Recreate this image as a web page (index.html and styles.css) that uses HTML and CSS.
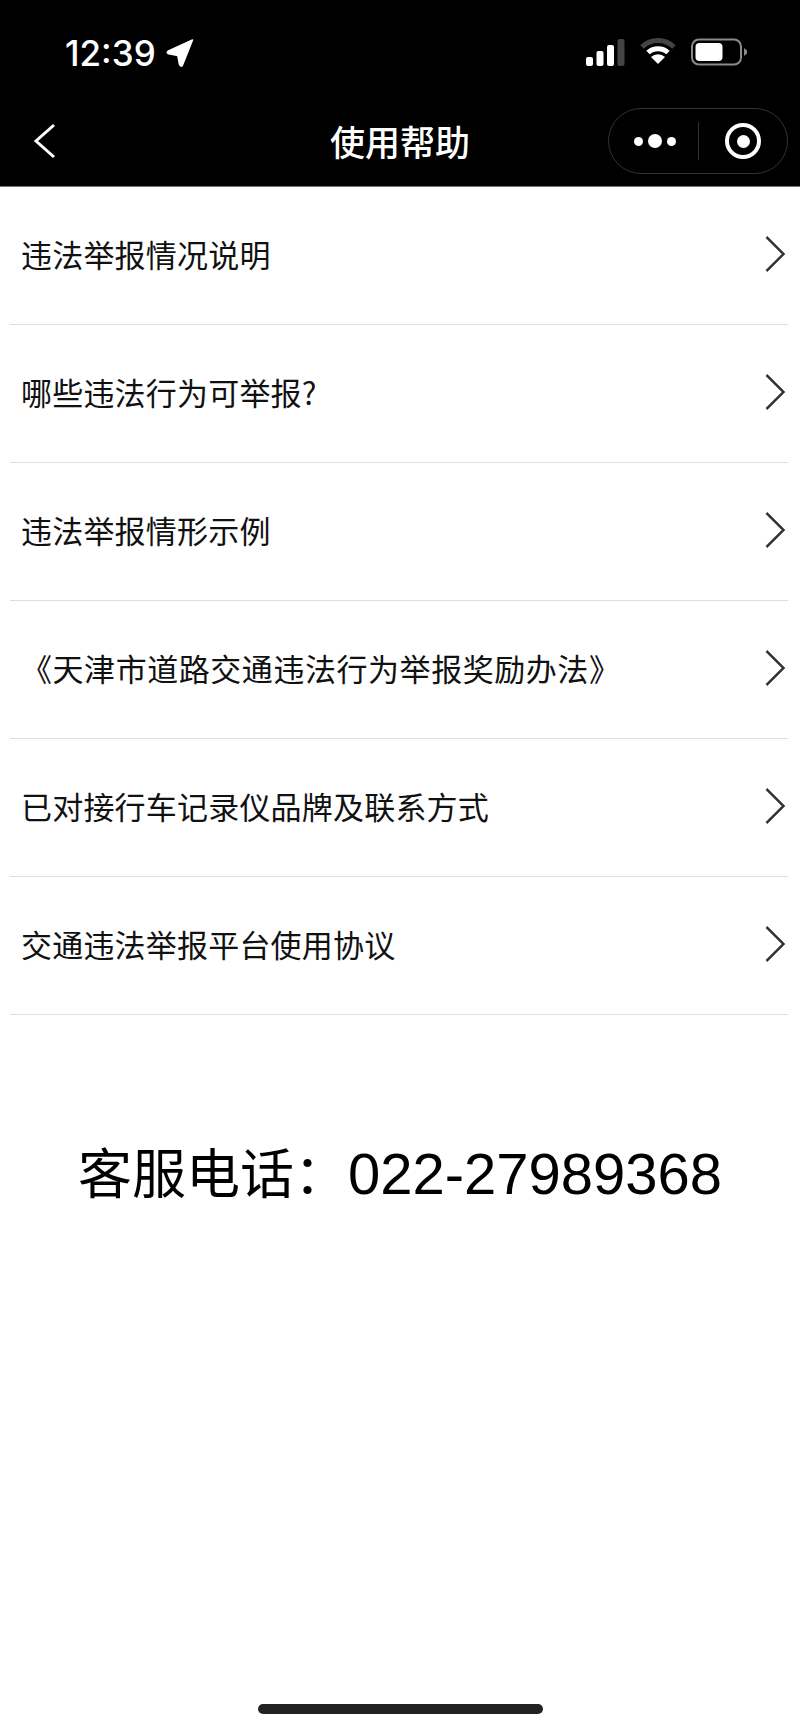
FILE: index.html
```html
<!DOCTYPE html>
<html lang="zh-CN">
<head>
  <meta charset="UTF-8">
  <meta name="viewport" content="width=device-width, initial-scale=1.0">
  <title>使用帮助</title>
  <link rel="stylesheet" href="styles.css">
</head>
<body>
  <header class="top">
    <div class="status-bar">
      <div class="status-left">
        <span class="clock">12:39</span>
        <svg class="location" width="28" height="28" viewBox="0 0 28 28"><path d="M26.500 1 L16.500 26 Q15 28.500 13.500 25.500 L11.800 16.500 L2.500 14.800 Q0 13.500 2.500 12 Z" fill="white" stroke="white" stroke-width="1.500" stroke-linejoin="round"/></svg>
      </div>
      <div class="status-right">
        <svg width="40" height="28" viewBox="0 0 40 28">
          <rect x="1" y="19" width="7" height="9" rx="2" fill="white"/>
          <rect x="11.500" y="13" width="7" height="15" rx="2" fill="white"/>
          <rect x="22" y="7" width="7" height="21" rx="2" fill="white"/>
          <rect x="32.500" y="1" width="7" height="27" rx="2" fill="#444"/>
        </svg>
        <svg width="36" height="28" viewBox="0 0 36 28">
          <path d="M2 9 A23 23 0 0 1 34 9" fill="none" stroke="#444" stroke-width="5"/>
          <path d="M8 14.500 A15 15 0 0 1 28 14.500" fill="none" stroke="white" stroke-width="5"/>
          <path d="M18 26 L11 19 A10 10 0 0 1 25 19 Z" fill="white"/>
        </svg>
        <svg width="56" height="28" viewBox="0 0 56 28">
          <rect x="1" y="1.500" width="49" height="25" rx="7" fill="none" stroke="#8a8a8a" stroke-width="2"/>
          <rect x="4.500" y="5" width="27" height="18" rx="4" fill="white"/>
          <path d="M53 10 L56 12.500 L56 15.500 L53 18 Z" fill="#8a8a8a"/>
        </svg>
      </div>
    </div>
    <div class="nav-bar">
      <svg class="back" width="24" height="36" viewBox="0 0 24 36"><path d="M21 2 L3 18 L21 34" fill="none" stroke="white" stroke-width="3"/></svg>
      <h1 class="nav-title">使用帮助</h1>
      <div class="capsule">
        <div class="dots"><i class="dot"></i><i class="dot dot-big"></i><i class="dot"></i></div>
        <div class="capsule-line"></div>
        <div class="target"><i class="target-core"></i></div>
      </div>
    </div>
  </header>

  <!-- 帮助列表 -->
  <ul class="help-list">
    <li class="help-item"><span>违法举报情况说明</span><svg class="arrow" width="24" height="38" viewBox="0 0 24 38"><path d="M3 2 L21 19 L3 36" fill="none" stroke="#333" stroke-width="2.500"/></svg></li>
    <li class="help-item"><span>哪些违法行为可举报?</span><svg class="arrow" width="24" height="38" viewBox="0 0 24 38"><path d="M3 2 L21 19 L3 36" fill="none" stroke="#333" stroke-width="2.500"/></svg></li>
    <li class="help-item"><span>违法举报情形示例</span><svg class="arrow" width="24" height="38" viewBox="0 0 24 38"><path d="M3 2 L21 19 L3 36" fill="none" stroke="#333" stroke-width="2.500"/></svg></li>
    <li class="help-item"><span class="book-title">《天津市道路交通违法行为举报奖励办法》</span><svg class="arrow" width="24" height="38" viewBox="0 0 24 38"><path d="M3 2 L21 19 L3 36" fill="none" stroke="#333" stroke-width="2.500"/></svg></li>
    <li class="help-item"><span>已对接行车记录仪品牌及联系方式</span><svg class="arrow" width="24" height="38" viewBox="0 0 24 38"><path d="M3 2 L21 19 L3 36" fill="none" stroke="#333" stroke-width="2.500"/></svg></li>
    <li class="help-item"><span>交通违法举报平台使用协议</span><svg class="arrow" width="24" height="38" viewBox="0 0 24 38"><path d="M3 2 L21 19 L3 36" fill="none" stroke="#333" stroke-width="2.500"/></svg></li>
  </ul>

  <p class="hotline"><span class="hotline-label">客服电话：</span>022-27989368</p>

  <div class="home-bar"></div>
</body>
</html>
```
FILE: styles.css
```css
* {
  box-sizing: border-box;
}
body {
  margin: 0;
  height: 1731px;
  background: #fff;
  font-family: "Liberation Sans", "Noto Sans CJK SC", sans-serif;
  color: #111;
  display: flex;
  flex-direction: column;
  overflow: hidden;
}
.top {
  height: 187px;
  background: #000;
  color: #fff;
  border-bottom: 1px solid #777;
  flex: none;
}
.status-bar {
  height: 101px;
  padding: 36px 53px 0 65px;
  display: flex;
  justify-content: space-between;
  align-items: flex-start;
}
.status-left {
  display: flex;
  align-items: center;
  gap: 10px;
}
.clock {
  font-family: Inter, "Liberation Sans", sans-serif;
  font-size: 35px;
  line-height: 34px;
  font-weight: 500;
}
.status-right {
  display: flex;
  align-items: center;
  gap: 15px;
  margin-top: 2px;
}
.nav-bar {
  height: 80px;
  padding: 0 12px 0 33px;
  display: flex;
  align-items: center;
  justify-content: space-between;
  position: relative;
}
.nav-title {
  position: absolute;
  left: 0;
  right: 0;
  margin: 0;
  text-align: center;
  font-family: "Noto Sans CJK SC", sans-serif;
  font-size: 35px;
  font-weight: 500;
  line-height: 48px;
}
.capsule {
  width: 180px;
  height: 66px;
  border: 1px solid #333;
  border-radius: 33px;
  display: flex;
  align-items: center;
}
.dots {
  width: 89px;
  padding-left: 2px;
  display: flex;
  align-items: center;
  justify-content: center;
  gap: 5px;
}
.dot {
  width: 9px;
  height: 9px;
  border-radius: 50%;
  background: #fff;
}
.dot-big {
  width: 14px;
  height: 14px;
}
.capsule-line {
  width: 1px;
  height: 38px;
  background: #333;
}
.target {
  margin-left: 26px;
  width: 36px;
  height: 36px;
  border: 4px solid #fff;
  border-radius: 50%;
  display: flex;
  align-items: center;
  justify-content: center;
}
.target-core {
  width: 13px;
  height: 13px;
  border-radius: 50%;
  background: #fff;
}
.help-list {
  list-style: none;
  margin: 0;
  padding: 0 12px 0 10px;
  flex: none;
}
.help-item {
  height: 138px;
  padding: 0 2px 4px 11px;
  border-bottom: 1px solid #ddd;
  display: flex;
  align-items: center;
  justify-content: space-between;
  font-size: 31px;
}
.help-item span {
  font-family: "Noto Sans CJK SC", sans-serif;
  letter-spacing: 0.2px;
}
.help-item .book-title {
  letter-spacing: 0.55px;
}
.arrow {
  margin-right: -1px;
  transform: scaleX(0.95);
}
.hotline {
  margin: 121px 0 0;
  text-align: center;
  font-size: 58px;
  line-height: 76px;
  color: #000;
}
.hotline-label {
  font-size: 54px;
}
.home-bar {
  position: absolute;
  left: 258px;
  top: 1704px;
  width: 285px;
  height: 10px;
  border-radius: 5px;
  background: #222;
}
```
